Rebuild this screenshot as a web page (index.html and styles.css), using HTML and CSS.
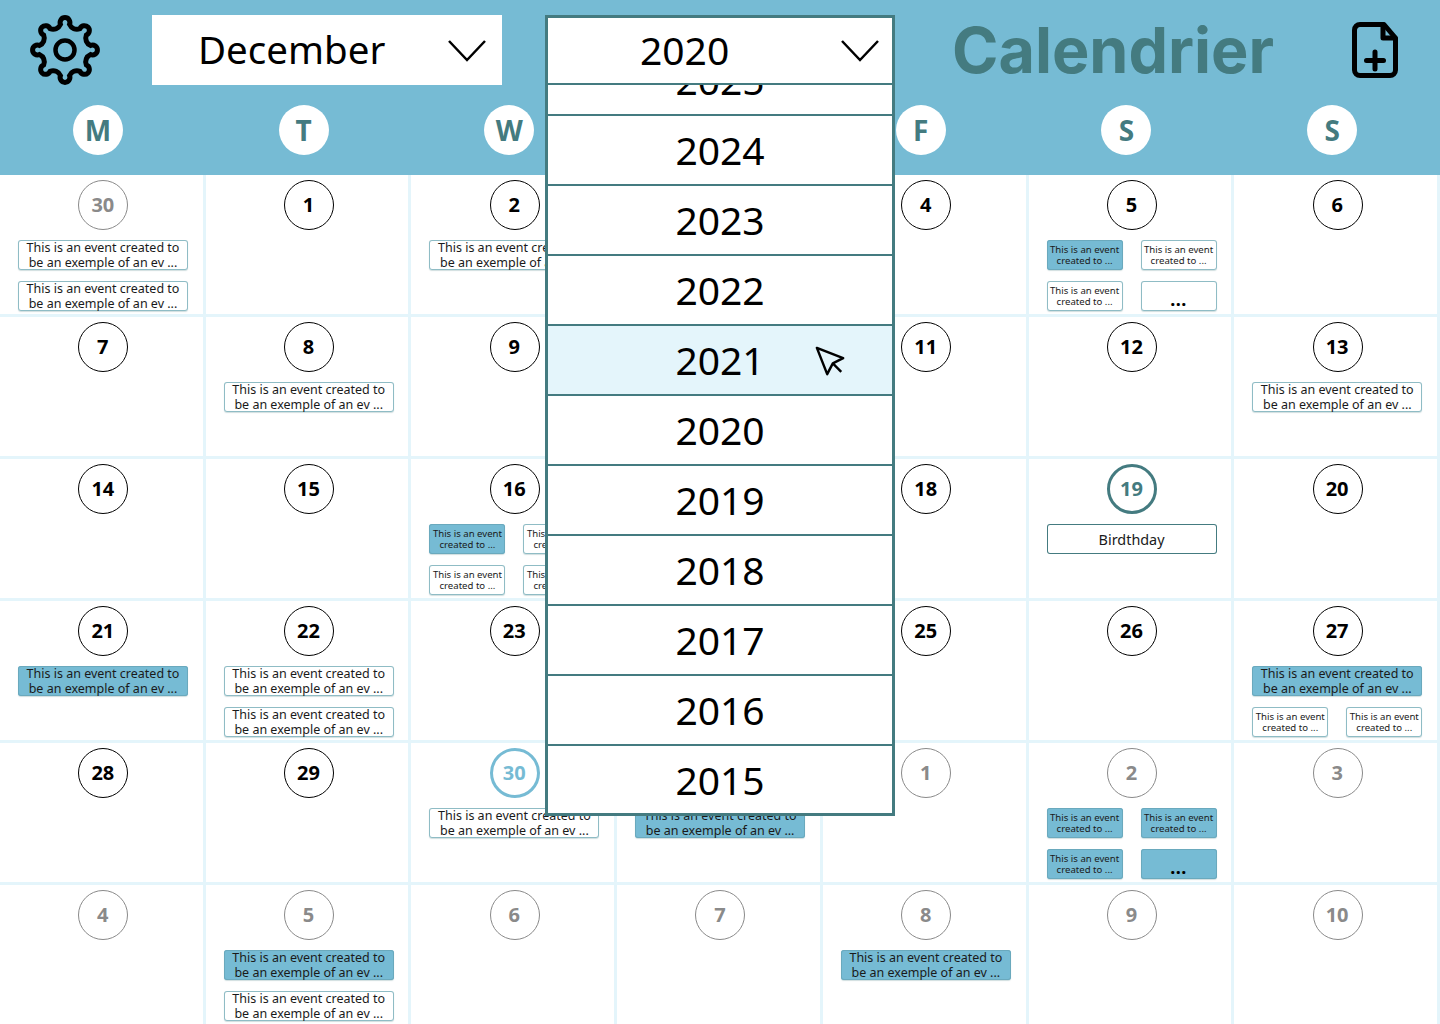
FILE: index.html
```html
<!DOCTYPE html>
<html lang="en">
<head>
    <meta charset="UTF-8">
    <meta name="viewport" content="width=device-width, initial-scale=1.0">
    <title>Calendrier</title>
    <link rel="stylesheet" href="styles.css">
</head>
<body>

    <!-- Header -->
    <header class="header">
        <div class="toolbar">
            <svg class="gear-icon" viewBox="-35 -35 70 70" aria-label="Settings">
                <path d="M-4.51 -25.6A4.9 4.9 0 1 1 4.51 -25.6A8 8 0 0 0 14.91 -21.3A4.9 4.9 0 1 1 21.3 -14.91A8 8 0 0 0 25.6 -4.51A4.9 4.9 0 1 1 25.6 4.51A8 8 0 0 0 21.3 14.91A4.9 4.9 0 1 1 14.91 21.3A8 8 0 0 0 4.51 25.6A4.9 4.9 0 1 1 -4.51 25.6A8 8 0 0 0 -14.91 21.3A4.9 4.9 0 1 1 -21.3 14.91A8 8 0 0 0 -25.6 4.51A4.9 4.9 0 1 1 -25.6 -4.51A8 8 0 0 0 -21.3 -14.91A4.9 4.9 0 1 1 -14.91 -21.3A8 8 0 0 0 -4.51 -25.6Z"/>
                <circle r="9.5" class="gear-hole"/>
            </svg>

            <div class="month-select">
                <span>December</span>
                <svg class="chevron" viewBox="0 0 38 22"><path d="M1 1L19 20L37 1"/></svg>
            </div>

            <!-- Year dropdown, open -->
            <div class="year-slot">
                <div class="year-dropdown">
                    <div class="year-current">
                        <span>2020</span>
                        <svg class="chevron" viewBox="0 0 38 22"><path d="M1 1L19 20L37 1"/></svg>
                    </div>
                    <div class="year-list">
                        <div class="year-item">2025</div>
                        <div class="year-item">2024</div>
                        <div class="year-item">2023</div>
                        <div class="year-item">2022</div>
                        <div class="year-item hovered">2021
                            <svg class="cursor-icon" viewBox="0 0 32 32"><path d="M2 2L30 13L19 18.5L13 30Z"/><path d="M19 18.5L28 27.500"/></svg>
                        </div>
                        <div class="year-item">2020</div>
                        <div class="year-item">2019</div>
                        <div class="year-item">2018</div>
                        <div class="year-item">2017</div>
                        <div class="year-item">2016</div>
                        <div class="year-item">2015</div>
                    </div>
                </div>
            </div>

            <h1 class="title">Calendrier</h1>

            <svg class="file-icon" viewBox="0 0 46 56" aria-label="New event">
                <path d="M8 2.500H32L43.500 16V48A5.500 5.500 0 0 1 38 53.500H8A5.500 5.500 0 0 1 2.500 48V8A5.500 5.500 0 0 1 8 2.500Z"/>
                <path d="M31 3V16H43"/>
                <path d="M23 30V47M14.500 38.500H31.500"/>
            </svg>
        </div>

        <div class="weekdays">
            <div class="weekday"><span>M</span></div>
            <div class="weekday"><span>T</span></div>
            <div class="weekday"><span>W</span></div>
            <div class="weekday"><span>T</span></div>
            <div class="weekday"><span>F</span></div>
            <div class="weekday"><span>S</span></div>
            <div class="weekday"><span>S</span></div>
        </div>
    </header>

    <!-- Month grid -->
    <main class="month-grid">
        <!-- Week 1 -->
        <div class="cell"><div class="date muted">30</div>
            <div class="events">
                <div class="event">This is an event created to<br>be an exemple of an ev ...</div>
                <div class="event">This is an event created to<br>be an exemple of an ev ...</div>
            </div>
        </div>
        <div class="cell"><div class="date">1</div></div>
        <div class="cell"><div class="date">2</div>
            <div class="events">
                <div class="event">This is an event created to<br>be an exemple of an ev ...</div>
            </div>
        </div>
        <div class="cell"><div class="date">3</div></div>
        <div class="cell"><div class="date">4</div></div>
        <div class="cell"><div class="date">5</div>
            <div class="events">
                <div class="event half blue">This is an event<br>created to ...</div>
                <div class="event half">This is an event<br>created to ...</div>
                <div class="event half">This is an event<br>created to ...</div>
                <div class="event half more">...</div>
            </div>
        </div>
        <div class="cell"><div class="date">6</div></div>

        <!-- Week 2 -->
        <div class="cell"><div class="date">7</div></div>
        <div class="cell"><div class="date">8</div>
            <div class="events">
                <div class="event">This is an event created to<br>be an exemple of an ev ...</div>
            </div>
        </div>
        <div class="cell"><div class="date">9</div></div>
        <div class="cell"><div class="date">10</div></div>
        <div class="cell"><div class="date">11</div></div>
        <div class="cell"><div class="date">12</div></div>
        <div class="cell"><div class="date">13</div>
            <div class="events">
                <div class="event">This is an event created to<br>be an exemple of an ev ...</div>
            </div>
        </div>

        <!-- Week 3 -->
        <div class="cell"><div class="date">14</div></div>
        <div class="cell"><div class="date">15</div></div>
        <div class="cell"><div class="date">16</div>
            <div class="events">
                <div class="event half blue">This is an event<br>created to ...</div>
                <div class="event half">This is an event<br>created to ...</div>
                <div class="event half">This is an event<br>created to ...</div>
                <div class="event half">This is an event<br>created to ...</div>
            </div>
        </div>
        <div class="cell"><div class="date">17</div></div>
        <div class="cell"><div class="date">18</div></div>
        <div class="cell"><div class="date today">19</div>
            <div class="events">
                <div class="event single">Birdthday</div>
            </div>
        </div>
        <div class="cell"><div class="date">20</div></div>

        <!-- Week 4 -->
        <div class="cell"><div class="date">21</div>
            <div class="events">
                <div class="event blue">This is an event created to<br>be an exemple of an ev ...</div>
            </div>
        </div>
        <div class="cell"><div class="date">22</div>
            <div class="events">
                <div class="event">This is an event created to<br>be an exemple of an ev ...</div>
                <div class="event">This is an event created to<br>be an exemple of an ev ...</div>
            </div>
        </div>
        <div class="cell"><div class="date">23</div></div>
        <div class="cell"><div class="date">24</div></div>
        <div class="cell"><div class="date">25</div></div>
        <div class="cell"><div class="date">26</div></div>
        <div class="cell"><div class="date">27</div>
            <div class="events">
                <div class="event blue">This is an event created to<br>be an exemple of an ev ...</div>
                <div class="event half">This is an event<br>created to ...</div>
                <div class="event half">This is an event<br>created to ...</div>
            </div>
        </div>

        <!-- Week 5 -->
        <div class="cell"><div class="date">28</div></div>
        <div class="cell"><div class="date">29</div></div>
        <div class="cell"><div class="date selected">30</div>
            <div class="events">
                <div class="event">This is an event created to<br>be an exemple of an ev ...</div>
            </div>
        </div>
        <div class="cell"><div class="date">31</div>
            <div class="events">
                <div class="event blue">This is an event created to<br>be an exemple of an ev ...</div>
            </div>
        </div>
        <div class="cell"><div class="date muted">1</div></div>
        <div class="cell"><div class="date muted">2</div>
            <div class="events">
                <div class="event half blue">This is an event<br>created to ...</div>
                <div class="event half blue">This is an event<br>created to ...</div>
                <div class="event half blue">This is an event<br>created to ...</div>
                <div class="event half blue more">...</div>
            </div>
        </div>
        <div class="cell"><div class="date muted">3</div></div>

        <!-- Week 6 -->
        <div class="cell"><div class="date muted">4</div></div>
        <div class="cell"><div class="date muted">5</div>
            <div class="events">
                <div class="event blue">This is an event created to<br>be an exemple of an ev ...</div>
                <div class="event">This is an event created to<br>be an exemple of an ev ...</div>
            </div>
        </div>
        <div class="cell"><div class="date muted">6</div></div>
        <div class="cell"><div class="date muted">7</div></div>
        <div class="cell"><div class="date muted">8</div>
            <div class="events">
                <div class="event blue">This is an event created to<br>be an exemple of an ev ...</div>
            </div>
        </div>
        <div class="cell"><div class="date muted">9</div></div>
        <div class="cell"><div class="date muted">10</div></div>
    </main>

</body>
</html>
```

FILE: styles.css
```css
/* General Styles */
html, body {
    margin: 0;
    padding: 0;
    height: 1024px;
    overflow: hidden;
    background-color: #fff;
    color: #000;
    font-family: "Noto Sans", "Open Sans", sans-serif;
}

/* Header */
.header {
    height: 175px;
    background-color: #76bbd4;
}

.toolbar {
    display: flex;
    align-items: flex-start;
    padding: 15px 0 0 30px;
    height: 70px;
}

.gear-icon {
    width: 70px;
    height: 70px;
    flex-shrink: 0;
    fill: none;
    stroke: #000;
    stroke-width: 5;
}

.gear-hole {
    stroke-width: 4.5;
}

.month-select {
    display: flex;
    align-items: center;
    justify-content: space-between;
    box-sizing: border-box;
    width: 350px;
    height: 70px;
    margin-left: 52px;
    padding: 0 16px 2px 46px;
    background-color: #fff;
    font-size: 38.500px;
}

.chevron {
    width: 38px;
    height: 22px;
    margin-top: 3px;
    fill: none;
    stroke: #000;
    stroke-width: 2.5;
}

/* Year dropdown */
.year-slot {
    position: relative;
    width: 349px;
    height: 70px;
    margin-left: 43px;
    flex-shrink: 0;
}

.year-dropdown {
    position: absolute;
    top: 0;
    left: 0;
    z-index: 10;
    box-sizing: border-box;
    width: 350px;
    height: 801px;
    border: 3px solid #447b80;
    background-color: #fff;
    overflow: hidden;
}

.year-current {
    position: relative;
    z-index: 1;
    display: flex;
    align-items: center;
    box-sizing: border-box;
    height: 67px;
    padding: 0 13px 3px 92px;
    justify-content: space-between;
    border-bottom: 2px solid #447b80;
    background-color: #fff;
    font-size: 39px;
}

.year-list {
    margin-top: -39px;
}

.year-item {
    position: relative;
    box-sizing: border-box;
    height: 70px;
    line-height: 68px;
    border-bottom: 2px solid #447b80;
    text-align: center;
    font-size: 39px;
}

.year-item.hovered {
    background-color: #e4f5fb;
}

.cursor-icon {
    position: absolute;
    top: 20px;
    left: 267px;
    width: 30px;
    height: 30px;
    fill: none;
    stroke: #000;
    stroke-width: 2.600;
    stroke-linejoin: round;
}

/* Title */
.title {
    margin: -15px 0 0 58px;
    width: 321px;
    font-family: Inter, "Noto Sans", sans-serif;
    font-size: 62.800px;
    font-weight: 700;
    line-height: 100px;
    color: #447b80;
    white-space: nowrap;
}

.file-icon {
    width: 46px;
    height: 56px;
    margin: 7px 0 0 79px;
    flex-shrink: 0;
    fill: none;
    stroke: #000;
    stroke-width: 5;
    stroke-linejoin: round;
    stroke-linecap: round;
}

/* Weekdays */
.weekdays {
    display: grid;
    grid-template-columns: repeat(7, 1fr);
    width: 1440px;
    margin: 20px 0 0 -5px;
}

.weekday {
    display: flex;
    justify-content: center;
}

.weekday span {
    display: flex;
    align-items: center;
    justify-content: center;
    width: 50px;
    height: 50px;
    border-radius: 50%;
    background-color: #fff;
    color: #447b80;
    font-size: 28px;
    font-weight: 700;
}

/* Month grid */
.month-grid {
    display: grid;
    grid-template-columns: repeat(7, 1fr);
    grid-auto-rows: 142px;
}

.cell {
    display: flex;
    flex-direction: column;
    align-items: center;
    box-sizing: border-box;
    padding: 5px 0 0 4px;
    border-right: 3px solid #e4f5fb;
    border-bottom: 3px solid #e4f5fb;
}

.date {
    display: flex;
    align-items: center;
    justify-content: center;
    box-sizing: border-box;
    width: 50px;
    height: 50px;
    flex-shrink: 0;
    padding: 0 1px 2px 0;
    border: 1px solid #000;
    border-radius: 50%;
    font-size: 20px;
    font-weight: 700;
}

.date.muted {
    border-color: #8a8a8a;
    color: #8a8a8a;
}

.date.today {
    border: 3px solid #447b80;
    color: #447b80;
}

.date.selected {
    border: 3px solid #76bbd4;
    color: #76bbd4;
}

/* Events */
.events {
    display: flex;
    flex-wrap: wrap;
    gap: 11px 18px;
    width: 170px;
    margin: 10px 0 0 -0.7px;
}

.event {
    box-sizing: border-box;
    width: 170px;
    height: 30px;
    border-radius: 3px;
    box-shadow: inset 0 0 0 1px #8fbcc5, 0 1px 1px rgba(68, 123, 128, 0.25);
    background-color: #fff;
    text-align: center;
    font-size: 12.5px;
    line-height: 15px;
    white-space: nowrap;
    color: #1a1a1a;
}

.event.half {
    width: 76px;
    padding-top: 4px;
    font-size: 9.6px;
    line-height: 11px;
}

.event.blue {
    background-color: #76bbd4;
    box-shadow: inset 0 0 0 1px #6aa9bd, 0 1px 1px rgba(68, 123, 128, 0.25);
}

.event.single {
    box-shadow: inset 0 0 0 1px #447b80;
    font-size: 14.400px;
    line-height: 32px;
}

.event.more {
    padding-top: 9px;
    font-size: 18px;
    font-weight: 700;
    line-height: 18px;
    letter-spacing: 0.5px;
    color: #000;
}
```
